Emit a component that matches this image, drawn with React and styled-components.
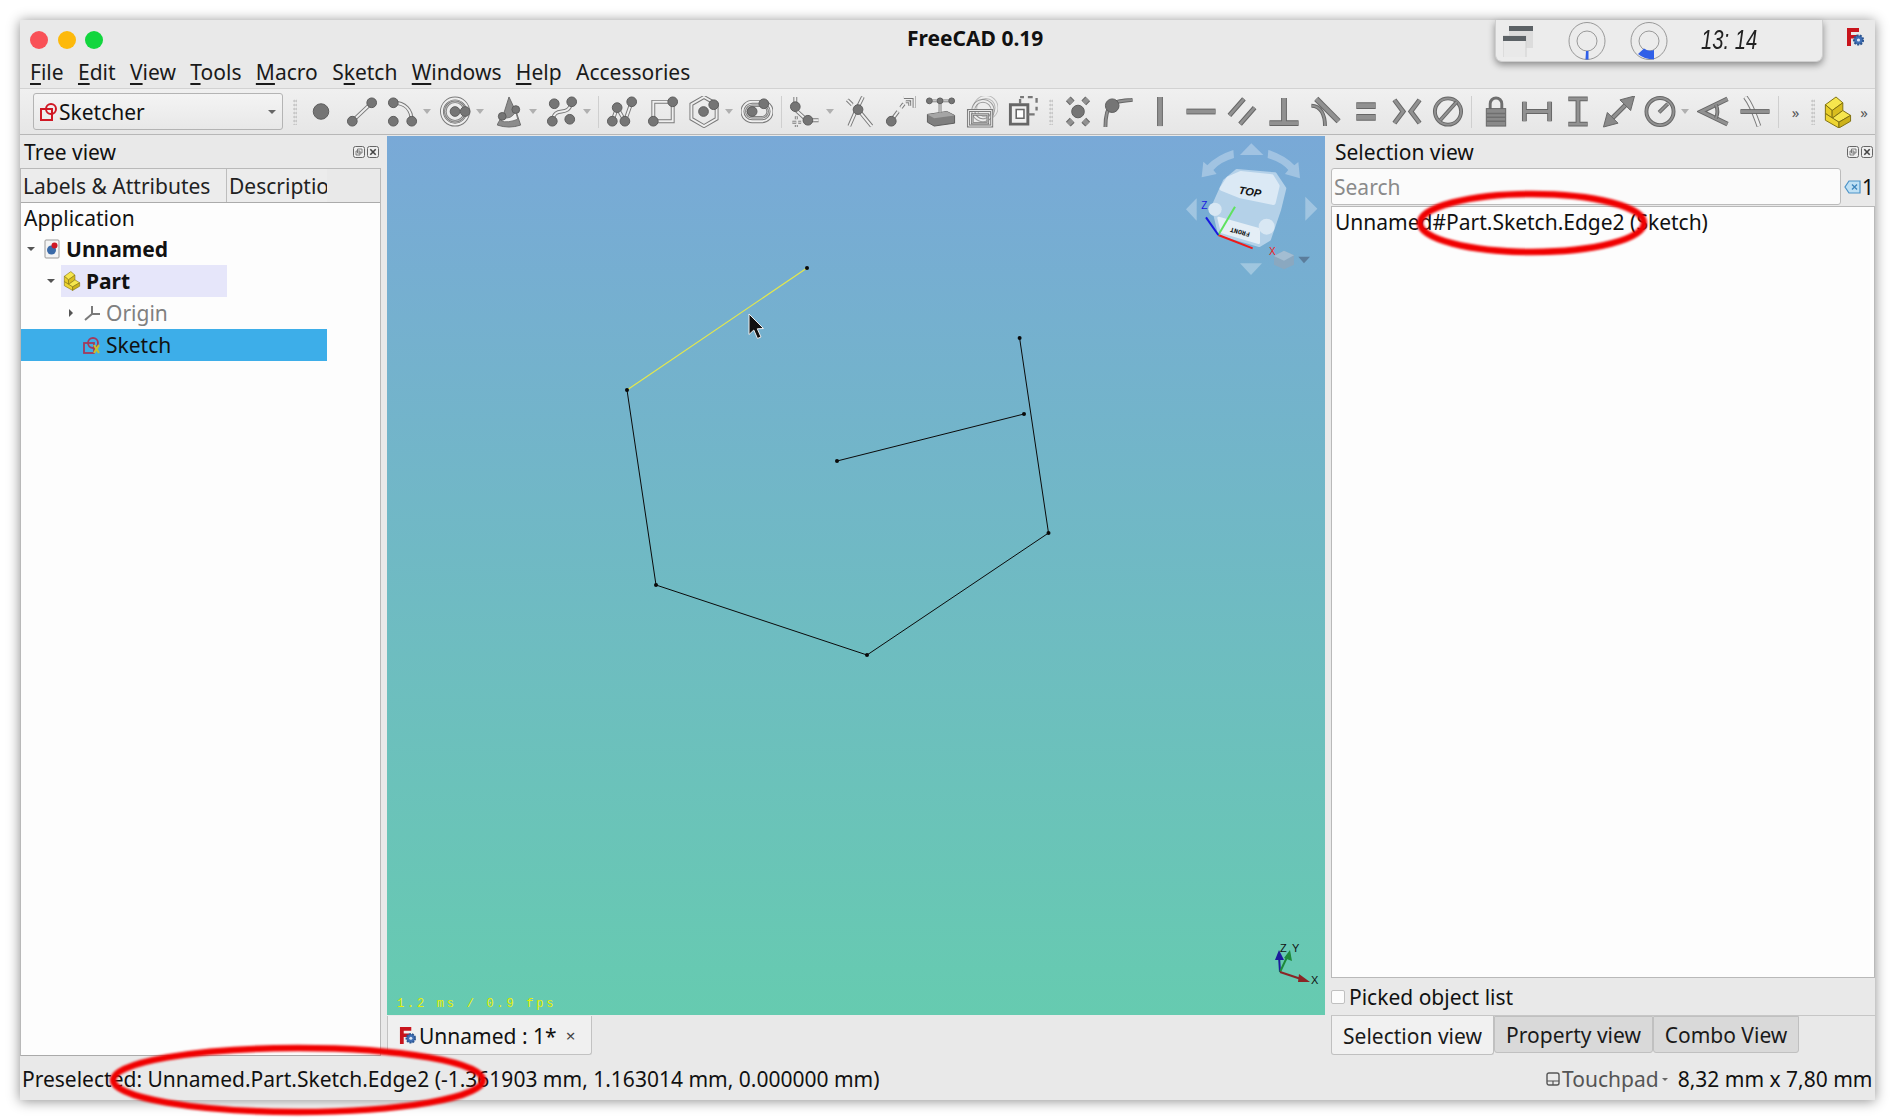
import React from 'react';
import styled, { createGlobalStyle } from 'styled-components';

const Global = createGlobalStyle`
  html, body { margin: 0; padding: 0; background: #fff; }
  body { font-family: "Noto Sans", sans-serif; color: #111; overflow: hidden; }
`;

const Page = styled.div`
  position: relative;
  width: 1894px;
  height: 1120px;
  padding: 20px 19px 20px 20px;
  box-sizing: border-box;
`;
const Window = styled.div`
  position: relative;
  display: flex;
  flex-direction: column;
  height: 100%;
  background: #e9e9e9;
  box-shadow: 0 1px 12px rgba(0, 0, 0, 0.45);
  font-size: 21px;
`;
const TitleBar = styled.div`
  position: relative;
  height: 40px;
  display: flex;
  align-items: center;
  padding-left: 10px;
  flex: none;
`;
const Light = styled.span`
  width: 18px;
  height: 18px;
  border-radius: 50%;
  margin-right: 9.5px;
  background: ${p => p.$c};
`;
const Title = styled.div`
  position: absolute;
  left: 887px;
  top: 4px;
  font-weight: 700;
  font-size: 21px;
  line-height: 28px;
`;
const Tray = styled.div`
  position: absolute;
  left: 1475px;
  top: 0;
  width: 328px;
  height: 42px;
  background: #ececec;
  border-radius: 0 0 7px 7px;
  border: 1px solid #cfcfcf;
  border-top: none;
  box-sizing: border-box;
  box-shadow: 0 3px 7px rgba(0, 0, 0, 0.4);
  display: flex;
  align-items: center;
  padding-left: 7px;
`;
const TrayDial = styled.svg`
  margin-left: ${p => p.$ml}px;
  flex: none;
`;
const Clock = styled.span`
  margin-left: 33px;
  font-family: "Liberation Sans", sans-serif;
  font-style: italic;
  font-size: 27px;
  color: #222;
  transform: scaleX(0.75);
  transform-origin: left center;
  white-space: pre;
`;
const CornerLogo = styled.span`
  position: absolute;
  left: 1826px;
  top: 8px;
  display: flex;
`;
const MenuBar = styled.div`
  height: 28px;
  flex: none;
  display: flex;
  gap: 14.4px;
  align-items: flex-start;
  padding-left: 10px;
  border-bottom: 1px solid #d2d2d2;
  font-size: 21px;
  line-height: 25px;
`;
const MenuItem = styled.span`
  color: #1a1a1a;
`;
const Key = styled.span`
  text-decoration: underline;
  text-underline-offset: 3px;
`;
const ToolBar = styled.div`
  height: 45px;
  flex: none;
  display: flex;
  align-items: center;
  padding-left: 13px;
  background: linear-gradient(#f0f0f0, #e6e6e6);
  border-bottom: 1px solid #b7b7b7;
`;
const Combo = styled.div`
  width: 250px;
  height: 37px;
  box-sizing: border-box;
  flex: none;
  display: flex;
  align-items: center;
  padding-left: 5px;
  border: 1px solid #b4b4b4;
  border-radius: 3px;
  background: linear-gradient(#f4f4f4, #e8e8e8);
  font-size: 21px;
  position: relative;
`;
const ComboArrow = styled.span`
  margin-left: auto;
  margin-right: 6px;
  border-left: 4px solid transparent;
  border-right: 4px solid transparent;
  border-top: 4px solid #666;
`;
const Handle = styled.span`
  flex: none;
  width: 4px;
  height: 26px;
  margin: ${p => p.$m};
  background-image: radial-gradient(#c2c2c2 0.8px, transparent 1px);
  background-size: 2.5px 4px;
`;
const ToolIconBox = styled.svg`
  flex: none;
  width: 32px;
  height: 32px;
  margin: 0 4.56px;
`;
const Drop = styled.span`
  flex: none;
  width: 12px;
  display: flex;
  justify-content: center;
  margin-left: -2px;
  margin-right: 2px;
  &::after {
    content: "";
    border-left: 4px solid transparent;
    border-right: 4px solid transparent;
    border-top: 5px solid #b0b0b0;
  }
`;
const ToolSep = styled.span`
  flex: none;
  width: 1px;
  height: 32px;
  background: #cfcfcf;
  margin: 0 3px;
`;
const More = styled.span`
  flex: none;
  font-size: 15px;
  color: #555;
  width: ${p => p.$w}px;
  text-align: center;
  line-height: 20px;
`;
const Main = styled.div`
  flex: 1;
  min-height: 0;
  display: flex;
`;
const LeftDock = styled.div`
  width: 361px;
  flex: none;
  display: flex;
  flex-direction: column;
`;
const DockHead = styled.div`
  height: 33px;
  flex: none;
  display: flex;
  align-items: center;
  justify-content: space-between;
  padding-left: ${p => p.$pl}px;
  font-size: 21px;
`;
const DockButtons = styled.span`
  display: flex;
  gap: 2px;
  padding-right: 2px;
`;
const TreeBox = styled.div`
  flex: 1;
  background: #fdfdfd;
  border: 1px solid #b9b9b9;
  border-bottom-color: #aaa;
  display: flex;
  flex-direction: column;
`;
const TreeHead = styled.div`
  height: 33px;
  flex: none;
  display: flex;
  background: #e9e9e9;
  border-bottom: 1px solid #ababab;
  font-size: 21px;
  color: #222;
`;
const TreeCol = styled.div`
  width: ${p => p.$w}px;
  box-sizing: border-box;
  padding-left: 2px;
  overflow: hidden;
  white-space: nowrap;
  background: #ececec;
  border-right: ${p => (p.$line ? '1px solid #bdbdbd' : 'none')};
  line-height: 35px;
`;
const Row = styled.div`
  width: 306px;
  height: 32px;
  display: flex;
  align-items: center;
  box-sizing: border-box;
  padding-left: ${p => 3 + p.$level * 20}px;
  background: ${p => (p.$selected ? '#3daee9' : 'transparent')};
  font-size: 21px;
  flex: none;
`;
const RowRoot = styled(Row)`
  padding-left: 3px;
  height: 30px;
`;
const Arrow = styled.span`
  width: 14px;
  height: 14px;
  flex: none;
  display: flex;
  align-items: center;
  justify-content: center;
  &::after {
    content: "";
    ${p =>
      p.$open
        ? 'border-left:4px solid transparent;border-right:4px solid transparent;border-top:4px solid #555;'
        : p.$closed
        ? 'border-top:4px solid transparent;border-bottom:4px solid transparent;border-left:4px solid #555;'
        : ''}
  }
`;
const RowLabel = styled.span`
  display: flex;
  align-items: center;
  margin-left: 3px;
  padding-left: 1px;
  height: 32px;
  width: ${p => (p.$w ? p.$w + 'px' : 'auto')};
  background: ${p => p.$bg || 'transparent'};
  font-weight: ${p => (p.$bold ? 700 : 400)};
  color: ${p => p.$color || '#111'};
  gap: 4px;
`;
const Center = styled.div`
  width: 938px;
  flex: none;
  margin-left: 6px;
  display: flex;
  flex-direction: column;
  padding-top: 1px;
`;
const Viewport = styled.div`
  position: relative;
  height: 879px;
  flex: none;
  background: linear-gradient(#79a9d7, #66cbb0);
`;
const Scene = styled.svg`
  display: block;
`;
const Fps = styled.span`
  position: absolute;
  left: 10px;
  bottom: 4px;
  font-family: "Liberation Mono", monospace;
  font-size: 12px;
  letter-spacing: 2.75px;
  color: #e8f000;
`;
const DocTabs = styled.div`
  flex: 1;
  display: flex;
  align-items: flex-start;
  padding-top: 1px;
`;
const DocTab = styled.div`
  width: 205px;
  height: 39px;
  box-sizing: border-box;
  display: flex;
  align-items: center;
  padding: 1px 0 0 11px;
  gap: 3px;
  background: #f0f0f0;
  border: 1px solid #c2c2c2;
  border-top: none;
  border-radius: 0 0 3px 3px;
  font-size: 21px;
`;
const TabClose = styled.span`
  margin-left: 6px;
  font-size: 17px;
  color: #444;
`;
const RightDock = styled.div`
  flex: 1;
  margin-left: 6px;
  display: flex;
  flex-direction: column;
  min-width: 0;
`;
const SearchRow = styled.div`
  height: 37px;
  flex: none;
  display: flex;
  align-items: center;
`;
const SearchBox = styled.div`
  width: 510px;
  height: 37px;
  box-sizing: border-box;
  flex: none;
  border: 1px solid #bcbcbc;
  border-radius: 3px;
  background: #fbfbfb;
  color: #8a8a8a;
  font-size: 21px;
  display: flex;
  align-items: center;
  padding-left: 2px;
`;
const ClearIcon = styled.svg`
  margin-left: 3px;
  flex: none;
`;
const Count = styled.span`
  margin-left: 1px;
`;
const SelList = styled.div`
  height: 772px;
  flex: none;
  margin-top: 1px;
  box-sizing: border-box;
  background: #fdfdfd;
  border: 1px solid #b9b9b9;
  padding: 0 0 0 3px;
  font-size: 21px;
  line-height: 30px;
`;
const Picked = styled.div`
  height: 37px;
  flex: none;
  display: flex;
  align-items: center;
  gap: 4px;
  font-size: 21px;
  border-bottom: 1px solid #c6c6c6;
`;
const Check = styled.span`
  width: 12px;
  height: 12px;
  background: #fcfcfc;
  border: 1px solid #c0c0c0;
  border-radius: 2px;
`;
const BottomTabs = styled.div`
  display: flex;
  flex: none;
  align-items: flex-start;
  font-size: 21px;
`;
const BottomTab = styled.div`
  width: ${p => p.$w}px;
  box-sizing: border-box;
  height: ${p => (p.$active ? 39 : 37)}px;
  display: flex;
  align-items: center;
  justify-content: center;
  padding-top: ${p => (p.$active ? 1 : 0)}px;
  background: ${p => (p.$active ? '#f1f1f1' : '#d9d9d9')};
  border: 1px solid #c0c0c0;
  border-top: ${p => (p.$active ? 'none' : '1px solid #c0c0c0')};
  border-radius: 0 0 3px 3px;
  color: #1a1a1a;
`;
const StatusBar = styled.div`
  height: 44px;
  flex: none;
  display: flex;
  align-items: center;
  padding: 2px 2.5px 0 2px;
  box-sizing: border-box;
  font-size: 21px;
  white-space: nowrap;
`;
const StatusRight = styled.span`
  margin-left: auto;
  display: flex;
  align-items: center;
`;
const Touchpad = styled.span`
  color: #555;
  margin: 0 1px 0 2px;
`;
const MiniDrop = styled.span`
  margin: 0 10px 0 2px;
  border-left: 3px solid transparent;
  border-right: 3px solid transparent;
  border-top: 3px solid #666;
`;
const Annotation = styled.svg`
  position: absolute;
  left: 0;
  top: 0;
  pointer-events: none;
`;
const InlineIcon = styled.svg`
  flex: none;
`;

/* ---------- icon parts ---------- */
const Dot = ({ x, y, r = 5 }) => <circle cx={x} cy={y} r={r} fill="#757575" stroke="#5c5c5c" strokeWidth="1" />;
const Rod = ({ d, w = 4 }) => (
  <>
    <path d={d} fill="none" stroke="#7a7a7a" strokeWidth={w} />
    <path d={d} fill="none" stroke="#efefef" strokeWidth={w - 2} />
  </>
);
const Bar = ({ d, w = 6 }) => (
  <>
    <path d={d} fill="none" stroke="#666" strokeWidth={w} />
    <path d={d} fill="none" stroke="#919191" strokeWidth={w - 2} />
  </>
);
const circlePath = (cx, cy, r) => `M${cx - r} ${cy}a${r} ${r} 0 1 0 ${2 * r} 0a${r} ${r} 0 1 0 ${-2 * r} 0`;

const PartShape = () => (
  <g stroke="#7f6f10" strokeWidth="1" strokeLinejoin="round">
    <path d="M4 9L15 1L22 7L11 15Z" fill="#f6e64e" />
    <path d="M4 9L11 15V23L4 18Z" fill="#e8cd28" />
    <path d="M11 15L22 7V15L11 23Z" fill="#d9bd1e" />
    <path d="M11 23L22 15L30 20L18 27Z" fill="#f6e64e" />
    <path d="M4 18L18 27V33L4 25Z" fill="#eed532" />
    <path d="M18 27L30 20V26L18 33Z" fill="#cdb21a" />
  </g>
);

const icons = {
  point: <Dot x={16} y={16} r={8} />,
  line: <><Rod d="M6 26L26 7" /><Dot x={6} y={26} /><Dot x={26} y={7} /></>,
  arc: <><Rod d="M6 7C18 7 25 14 25 26" /><Dot x={6} y={7} /><Dot x={6} y={26} /><Dot x={25} y={26} /></>,
  circle: <><Rod d={circlePath(15, 16, 13.5)} /><Rod d={circlePath(15, 16, 10)} w={2.6} /><Dot x={15} y={16} /><Dot x={25.5} y={16} /></>,
  cone: (
    <>
      <path d="M16 1 L10 20 Q4 28 4 30 Q16 34 28 30 L24 18 Z" fill="#8c8c8c" stroke="#6a6a6a" />
      <path d="M9 22 Q18 25 23 16 L25 24 Q15 28 8 26Z" fill="#f0f0f0" stroke="#777" />
      <Dot x={9} y={21} r={4} /><Dot x={23} y={14} r={4} />
    </>
  ),
  bspline: <><Rod d="M6 26C9 8 22 24 26 6" /><Dot x={8} y={8} /><Dot x={26} y={6} /><Dot x={6} y={26} /><Dot x={24} y={24} /></>,
  polyline: <><Rod d="M6 26L11 12L19 26L26 6" /><Dot x={11} y={12} /><Dot x={26} y={6} /><Dot x={6} y={26} /><Dot x={19} y={26} /></>,
  rect: <><Rod d="M6 6H26V26H6Z" /><Dot x={6} y={26} /><Dot x={26} y={6} /></>,
  hexagon: <><Rod d="M16 1L29 8.5V23.5L16 31L3 23.5V8.5Z" /><Dot x={15.5} y={16} /><Dot x={26} y={9} /></>,
  slot: <><Rod d="M11 6H21A10 10 0 0 1 21 26H11A10 10 0 0 1 11 6Z" /><Rod d="M11 10H21A6 6 0 0 1 21 22H11A6 6 0 0 1 11 10Z" w={2.6} /><Dot x={11} y={16} /><Dot x={23} y={8} /></>,
  fillet: (
    <>
      <Rod d="M6 1V8M6 14L18 25M22 25H30" />
      <Rod d="M7 21V24M3 27H7M9 27H12M7 30V32" w={3} />
      <Dot x={6} y={11} /><Dot x={19} y={25} />
    </>
  ),
  trim: <><Rod d="M20 1L13 15L6 31" /><Rod d="M4 4L9 9M15 14L29 31" /><Dot x={15} y={14} /></>,
  extend: <><Rod d="M20 1H31V12M8 24L14 16M17 12L20 8" /><Rod d="M22 6H26V10" w={3} /><Dot x={7} y={26} /></>,
  external: (
    <>
      <path d="M2 19L22 16L30 20L30 28L9 31L2 27Z" fill="#7f7f7f" stroke="#5c5c5c" />
      <path d="M2 19L22 16L30 20L9 23Z" fill="#a5a5a5" />
      <Rod d="M15 17V8M4 5H28" w={3} />
      <Dot x={4} y={5} r={3} /><Dot x={15} y={5} r={3} /><Dot x={27} y={5} r={3} />
    </>
  ),
  carbon: (
    <>
      <g opacity="0.45"><Rod d={circlePath(20, 12, 11)} /></g>
      <g opacity="0.7"><Rod d={circlePath(17, 15, 10)} /></g>
      <Rod d="M2 15H26V31H2Z" w={3} />
      <Rod d="M6 19H22V28H6Z" w={2.6} />
    </>
  ),
  mirror: (
    <>
      <path d="M3 9H21V29H3Z" fill="#efefef" stroke="#666" strokeWidth="3" />
      <path d="M9 14H17V23H9Z" fill="#fff" stroke="#666" strokeWidth="1.6" />
      <path d="M13 3V8M21 19H28M13 1H17M21 1H26M30 2V7M30 11V15" fill="none" stroke="#777" strokeWidth="2.4" />
    </>
  ),
  coincident: <><Bar d="M6 3L10 7M26 3L22 7M6 29L10 25M26 29L22 25" w={7} /><Dot x={16} y={16} r={6.5} /></>,
  pointon: <><Bar d="M2 32C2 24 3 14 8 9C12 5 20 5 30 4" w={4} /><Dot x={9} y={10} r={7} /></>,
  vertical: <Bar d="M16 1V31" w={6} />,
  horizontal: <Bar d="M1 16H31" w={6} />,
  parallel: <Bar d="M3 20L18 3M14 29L29 12" w={5} />,
  perpendicular: <Bar d="M16 2V27M1 28H31" w={6} />,
  tangent: <><Bar d="M2 10C12 10 16 20 16 31" w={4} /><Bar d="M7 3L30 26" w={6} /></>,
  equal: <Bar d="M6 10H26M6 22H26" w={7} />,
  symmetric: <Bar d="M3 4L12 16L3 28M29 4L20 16L29 28" w={5} />,
  block: <><Bar d={circlePath(16, 16, 13.5)} w={4} /><Bar d="M8 25L25 6" w={4} /></>,
  lock: (
    <>
      <path d="M10 14V8a6 6 0 0 1 12 0V14" fill="none" stroke="#6e6e6e" strokeWidth="3" />
      <rect x="6" y="13" width="20" height="18" fill="#8a8a8a" stroke="#666" />
      <path d="M6 18H26M6 22H26M6 26H26" stroke="#6f6f6f" strokeWidth="1.5" />
    </>
  ),
  hdist: <Bar d="M3 6V26M29 6V26M3 16H29" w={5} />,
  vdist: <Bar d="M6 3H26M6 29H26M16 3V29" w={5} />,
  distance: (
    <>
      <Bar d="M8 24L24 8" w={5} />
      <path d="M0 32L4 17L15 28Z M32 0L28 15L17 4Z" fill="#8a8a8a" stroke="#666" />
    </>
  ),
  radius: <><Bar d={circlePath(16, 16, 14)} w={4} /><Bar d="M15 17L24 8" w={4} /></>,
  angle: <><Bar d="M31 3L4 16L31 29" w={5} /><Bar d="M19 9Q22 16 19 23" w={4} /></>,
  snell: <><Rod d="M6 1C13 10 16 20 20 31" w={5} /><Bar d="M1 16H31" w={5} /></>,
  part: <PartShape />,
};

const tools1 = [
  ['point'], ['line'], ['arc', 1], ['circle', 1], ['cone', 1], ['bspline', 1], '|',
  ['polyline'], ['rect'], ['hexagon', 1], ['slot'], '|',
  ['fillet', 1], ['trim'], ['extend'], ['external'], ['carbon'], ['mirror'], 'h',
  ['coincident'], ['pointon'], ['vertical'], ['horizontal'], ['parallel'], ['perpendicular'], ['tangent'],
  ['equal'], ['symmetric'], ['block'], '|',
  ['lock'], ['hdist'], ['vdist'], ['distance'], ['radius', 1], ['angle'], ['snell'], '|',
];

const ToolIcon = ({ name }) => <ToolIconBox viewBox="0 0 32 33">{icons[name]}</ToolIconBox>;

const FreeCadLogo = ({ size = 18 }) => (
  <InlineIcon width={size} height={size} viewBox="0 0 18 18">
    <path d="M1 0H13V4H5V7H11V10.5H5V18H1Z" fill="#c8141c" />
    <circle cx="12.5" cy="12" r="4.6" fill="#3f6fb5" stroke="#2c5590" strokeWidth="2" strokeDasharray="2 1.2" />
    <circle cx="12.5" cy="12" r="1.6" fill="#dce6f4" />
  </InlineIcon>
);

const DockIcons = () => (
  <DockButtons>
    <svg width="12" height="12" viewBox="0 0 12 12">
      <rect x=".5" y=".5" width="11" height="11" rx="2" fill="#eee" stroke="#666" />
      <path d="M4.5 3H9V7H4.5Z M3 5H7V9H3Z" fill="none" stroke="#666" strokeWidth=".8" />
    </svg>
    <svg width="12" height="12" viewBox="0 0 12 12">
      <rect x=".5" y=".5" width="11" height="11" rx="2" fill="#eee" stroke="#666" />
      <path d="M3.3 3.3L8.7 8.7M8.7 3.3L3.3 8.7" stroke="#444" strokeWidth="1.6" />
    </svg>
  </DockButtons>
);

const Dial = ({ wedge, ml }) => (
  <TrayDial width="38" height="40" viewBox="0 0 38 40" $ml={ml}>
    <ellipse cx="19" cy="20" rx="18" ry="18.5" fill="none" stroke="#999" />
    <circle cx="19" cy="20" r="10" fill="none" stroke="#999" />
    <path d={wedge} fill="#2f5fe8" />
  </TrayDial>
);

const Scene3D = () => (
  <Scene width="938" height="879" viewBox="387 136 938 879">
    <g stroke="#0a0a0a" strokeWidth="1" fill="none">
      <path d="M627 390L656 585L867 655L1048.5 533L1019.6 338" />
      <path d="M1024 414L837 461" />
    </g>
    <path d="M627 390L807 268" stroke="#e6e84a" strokeWidth="1.2" />
    {[[627, 390], [656, 585], [867, 655], [1048.5, 533], [1019.6, 338], [1024, 414], [837, 461], [807, 268]].map(([x, y]) => (
      <circle key={x} cx={x} cy={y} r="2" fill="#0a0a0a" />
    ))}
    <path d="M749 314V334.5L753.8 330L757.5 338.5L761 337L757.3 328.8L763.5 328.5Z" fill="#111" stroke="#eee" strokeWidth="1" />

    {/* navigation cube */}
    <g transform="translate(1160 130) scale(0.3333)">
      <g fill="#fff" opacity="0.3">
        <path d="M240 75L274 40L310 75Z" />
        <path d="M240 400H306L273 435Z" />
        <path d="M78 238L110 205V272Z" />
        <path d="M436 200V272L472 236Z" />
        <path d="M220 60L222 84Q180 96 160 120L170 132L125 142L130 95L142 106Q170 76 220 60Z" />
        <path d="M325 60L323 84Q365 96 385 120L375 132L420 145L415 96L403 106Q375 76 325 60Z" />
      </g>
      <path d="M230 122L345 132L374 175L358 240L328 328L298 346L179 312L159 230L194 152Z" fill="#c4dbee" opacity="0.8" stroke="#c4dbee" strokeWidth="10" strokeLinejoin="round" />
      <path d="M242 130L335 140L352 168L340 218L242 198L186 176L206 146Z" fill="#dbe9f5" stroke="#dbe9f5" strokeWidth="14" strokeLinejoin="round" />
      <path d="M176 264L296 298L296 338L186 306Z" fill="#e4eef6" stroke="#e4eef6" strokeWidth="8" strokeLinejoin="round" />
      <circle cx="320" cy="290" r="24" fill="#d8e7f3" />
      <circle cx="165" cy="238" r="20" fill="#d8e7f3" />
      <text x="270" y="197" fontFamily="Liberation Sans" fontStyle="italic" fontWeight="700" fontSize="33" textAnchor="middle" transform="rotate(10 270 187)" fill="#111">TOP</text>
      <text x="240" y="312" fontFamily="Liberation Mono" fontWeight="700" fontSize="20" textAnchor="middle" transform="rotate(195 240 306)" fill="#111">FRONT</text>
      <path d="M175 315L278 355" stroke="#f01818" strokeWidth="6" />
      <path d="M175 315L225 230" stroke="#5fe25f" strokeWidth="6" />
      <path d="M175 315L138 262" stroke="#1818e0" strokeWidth="6" />
      <text x="133" y="238" fontFamily="Liberation Sans" fontSize="30" textAnchor="middle" fill="#1818e0">Z</text>
      <text x="337" y="376" fontFamily="Liberation Sans" fontSize="30" textAnchor="middle" fill="#f01818">X</text>
      <path d="M342 378L372 362L402 376V404L372 418L342 404Z" fill="#8aa8c0" />
      <path d="M342 378L372 392L402 376L372 362Z" fill="#a3bdd2" />
      <path d="M415 380H450L432 400Z" fill="#5b7d9b" />
    </g>

    {/* axis cross */}
    <g fill="none" strokeWidth="2">
      <path d="M1280 972L1279 956" stroke="#1c1c9c" />
      <path d="M1280 972L1288 955" stroke="#1e8a3a" />
      <path d="M1280 972L1304 980" stroke="#8a2525" />
    </g>
    <path d="M1279 950L1275 960H1284Z" fill="#1c1c9c" />
    <path d="M1290 950L1284 958L1292 961Z" fill="#1e8a3a" />
    <path d="M1310 982L1299 974L1298 982Z" fill="#8a2525" />
    <g fontFamily="Liberation Sans" fontSize="11" fill="#111">
      <text x="1280" y="952">Z</text>
      <text x="1292" y="952">Y</text>
      <text x="1311" y="984">X</text>
    </g>
  </Scene>
);

export default function App() {
  return (
    <Page>
      <Global />
      <Window>
        <TitleBar>
          <Light $c="#f95157" />
          <Light $c="#fdb90b" />
          <Light $c="#12d63e" />
          <Title>FreeCAD 0.19</Title>
          <Tray>
            <svg width="30" height="32" viewBox="0 0 30 32">
              <rect x="6" y="1" width="24" height="22" fill="#dcdcdc" />
              <rect x="6" y="1" width="24" height="5" fill="#5c6266" />
              <rect x="0" y="11" width="23" height="22" fill="#e9e9e9" stroke="#d0d0d0" />
              <rect x="0" y="11" width="23" height="5" fill="#5c6266" />
            </svg>
            <Dial ml={35} wedge="M17.5 38.5L18 30H20.5L20.5 38.5Z" />
            <Dial ml={24} wedge="M8 33L14 27.5Q19 31 24 29L24 38.5Q14 38 8 33Z" />
            <Clock>13: 14</Clock>
          </Tray>
          <CornerLogo><FreeCadLogo /></CornerLogo>
        </TitleBar>
        <MenuBar>
          <MenuItem><Key>F</Key>ile</MenuItem>
          <MenuItem><Key>E</Key>dit</MenuItem>
          <MenuItem><Key>V</Key>iew</MenuItem>
          <MenuItem><Key>T</Key>ools</MenuItem>
          <MenuItem><Key>M</Key>acro</MenuItem>
          <MenuItem>S<Key>k</Key>etch</MenuItem>
          <MenuItem><Key>W</Key>indows</MenuItem>
          <MenuItem><Key>H</Key>elp</MenuItem>
          <MenuItem>Accessories</MenuItem>
        </MenuBar>
        <ToolBar>
          <Combo>
            <InlineIcon width="20" height="20" viewBox="0 0 20 20">
              <rect x="2" y="7" width="11" height="11" fill="none" stroke="#d01824" strokeWidth="2" />
              <circle cx="12" cy="7" r="5" fill="none" stroke="#d01824" strokeWidth="2" />
            </InlineIcon>
            Sketcher
            <ComboArrow />
          </Combo>
          <Handle $m="0 3px 0 10px" />
          {tools1.map((t, i) => {
            if (t === '|') return <ToolSep key={i} />;
            if (t === 'h') return <Handle key={i} $m="0 5px" />;
            return (
              <React.Fragment key={i}>
                <ToolIcon name={t[0]} />
                {t[1] && <Drop />}
              </React.Fragment>
            );
          })}
          <More $w={27}>»</More>
          <Handle $m="0 1.5px" />
          <ToolIcon name="part" />
          <More $w={14}>»</More>
        </ToolBar>
        <Main>
          <LeftDock>
            <DockHead $pl={4}>Tree view<DockIcons /></DockHead>
            <TreeBox>
              <TreeHead>
                <TreeCol $w={206} $line>Labels &amp; Attributes</TreeCol>
                <TreeCol $w={100}>Description</TreeCol>
              </TreeHead>
              <RowRoot $level={0}>Application</RowRoot>
              <Row $level={0}>
                <Arrow $open />
                <RowLabel $bold>
                  <svg width="20" height="20" viewBox="0 0 20 20">
                    <rect x="3" y="1" width="14" height="18" rx="1" fill="#f4f4f4" stroke="#999" />
                    <circle cx="9.5" cy="11" r="4.5" fill="#3a6aa8" />
                    <circle cx="12.5" cy="6.5" r="3" fill="#d01824" />
                  </svg>
                  Unnamed
                </RowLabel>
              </Row>
              <Row $level={1}>
                <Arrow $open />
                <RowLabel $bold $bg="#e6e6fa" $w={165}>
                  <svg width="20" height="20" viewBox="0 0 34 34"><PartShape /></svg>
                  Part
                </RowLabel>
              </Row>
              <Row $level={2}>
                <Arrow $closed />
                <RowLabel $color="#808080">
                  <svg width="20" height="20" viewBox="0 0 20 20">
                    <path d="M10 3V11M10 11H18M10 11L3 17" fill="none" stroke="#7a7a7a" strokeWidth="2" />
                  </svg>
                  Origin
                </RowLabel>
              </Row>
              <Row $level={2} $selected>
                <Arrow />
                <RowLabel>
                  <svg width="20" height="20" viewBox="0 0 20 20">
                    <rect x="2" y="8" width="10" height="10" fill="none" stroke="#a33a5c" strokeWidth="1.8" />
                    <circle cx="11" cy="8" r="5" fill="none" stroke="#a33a5c" strokeWidth="1.8" />
                    <path d="M12 10L17 18M17 10L12 18" stroke="#c8c030" strokeWidth="2.2" />
                  </svg>
                  Sketch
                </RowLabel>
              </Row>
            </TreeBox>
          </LeftDock>
          <Center>
            <Viewport>
              <Scene3D />
              <Fps>1.2 ms / 0.9 fps</Fps>
            </Viewport>
            <DocTabs>
              <DocTab>
                <FreeCadLogo size={17} />
                Unnamed : 1*
                <TabClose>×</TabClose>
              </DocTab>
            </DocTabs>
          </Center>
          <RightDock>
            <DockHead $pl={4}>Selection view<DockIcons /></DockHead>
            <SearchRow>
              <SearchBox>Search</SearchBox>
              <ClearIcon width="17" height="14" viewBox="0 0 17 14">
                <path d="M5 1H16V13H5L1 7Z" fill="#bfe0f4" stroke="#4c93c8" strokeWidth="1.2" />
                <path d="M8 4.5L13 9.5M13 4.5L8 9.5" stroke="#3f86bd" strokeWidth="1.4" />
              </ClearIcon>
              <Count>1</Count>
            </SearchRow>
            <SelList>Unnamed#Part.Sketch.Edge2 (Sketch)</SelList>
            <Picked><Check />Picked object list</Picked>
            <BottomTabs>
              <BottomTab $active $w={163}>Selection view</BottomTab>
              <BottomTab $w={159}>Property view</BottomTab>
              <BottomTab $w={146}>Combo View</BottomTab>
            </BottomTabs>
          </RightDock>
        </Main>
        <StatusBar>
          Preselected: Unnamed.Part.Sketch.Edge2 (-1.361903 mm, 1.163014 mm, 0.000000 mm)
          <StatusRight>
            <svg width="14" height="14" viewBox="0 0 14 14">
              <rect x="1" y="1" width="12" height="12" rx="2" fill="none" stroke="#555" strokeWidth="1.4" />
              <path d="M1 9H13M7 9V13" stroke="#555" strokeWidth="1.2" />
            </svg>
            <Touchpad>Touchpad</Touchpad>
            <MiniDrop />
            8,32 mm x 7,80 mm
          </StatusRight>
        </StatusBar>
      </Window>
      <Annotation width="1894" height="1120" viewBox="0 0 1894 1120">
        <g fill="none" stroke="#f00000" strokeWidth="6.5" style={{ filter: 'blur(0.8px)' }}>
          <ellipse cx="1532" cy="223" rx="112" ry="29" />
          <ellipse cx="298" cy="1080" rx="185" ry="32" />
        </g>
      </Annotation>
    </Page>
  );
}
